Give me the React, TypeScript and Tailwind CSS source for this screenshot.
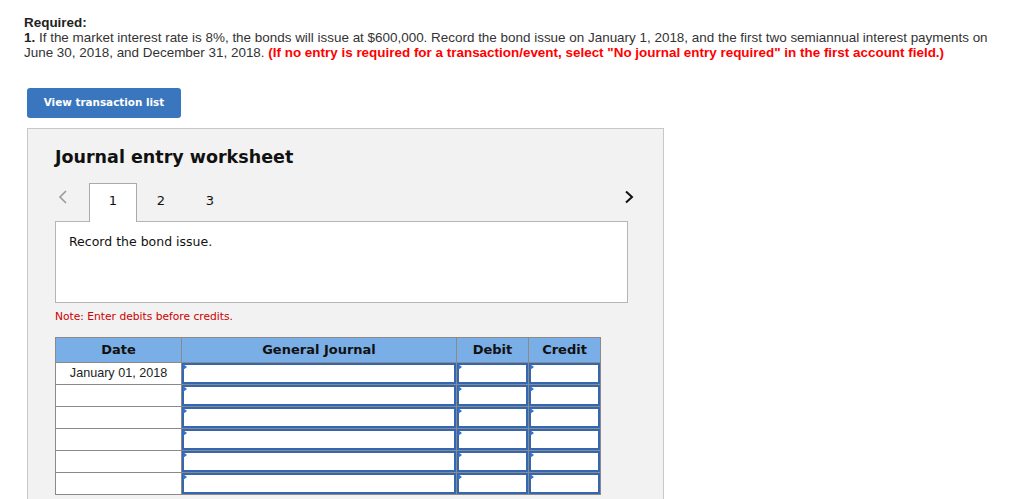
import React from 'react';

const rows = ['January 01, 2018', '', '', '', '', ''];

const InputCell: React.FC = () => (
    <div className="bg-white">
        <div className="relative h-full border-2 border-[#3467b0] bg-white">
            <span className="absolute -top-px -left-px h-0 w-0 border-y-[3px] border-y-transparent border-l-[4px] border-l-[#2f72d0]"></span>
        </div>
    </div>
);

const App: React.FC = () => {
    return (
        <div className="min-h-[499px] overflow-hidden bg-white">
            <div className="pl-6 pt-[15px] font-['Liberation_Sans',Arial,sans-serif] text-[13.45px] leading-[15px] text-[#333]">
                <p className="font-bold text-[#222]">Required:</p>
                <p>
                    <b className="text-[#222]">1.</b> If the market interest rate is 8%, the bonds will issue at $600,000. Record the bond issue on January 1, 2018, and the first two semiannual interest payments on
                    <br />
                    June 30, 2018, and December 31, 2018.{' '}
                    <span className="font-bold text-[#f00]">
                        (If no entry is required for a transaction/event, select "No journal entry required" in the first account field.)
                    </span>
                </p>
            </div>

            <button className="ml-[27px] mt-[28px] flex h-[30px] w-[154px] items-center justify-center rounded-[3px] bg-[#3a76bd] font-['DejaVu_Sans',Verdana,sans-serif] text-[10.4px] font-bold text-white">
                View transaction list
            </button>

            <div className="ml-[27px] mt-[10px] h-[400px] w-[637px] border border-[#c8c8c8] bg-[#f2f2f2] pl-[27px] pt-[17px] font-['DejaVu_Sans',Verdana,sans-serif]">
                <h2 className="text-[17.5px] font-bold leading-[22px] text-[#111]">Journal entry worksheet</h2>

                <div className="mt-[15px] flex h-[38px] w-[579px] items-start">
                    <div className="w-[34px] pl-[3px] pt-[7px]">
                        <svg width="10" height="14" viewBox="0 0 10 14">
                            <polyline points="8,1 2,7 8,13" fill="none" stroke="#9a9a9a" strokeWidth="1.6" />
                        </svg>
                    </div>
                    <div className="relative z-10 flex h-[39px] w-[48px] justify-center border border-b-0 border-[#aaa] bg-white pt-[7px] text-[13px] text-[#111]">
                        1
                    </div>
                    <div className="flex w-[48px] justify-center pt-[8px] text-[13px] text-[#111]">2</div>
                    <div className="flex w-[48px] justify-center pt-[8px] pl-[2px] text-[13px] text-[#111]">3</div>
                    <div className="ml-auto pt-[7px]">
                        <svg width="10" height="14" viewBox="0 0 10 14">
                            <polyline points="2,1.5 8,7 2,12.5" fill="none" stroke="#111" strokeWidth="2" />
                        </svg>
                    </div>
                </div>

                <div className="h-[82px] w-[573px] border border-[#b5b5b5] bg-white px-[13px] pt-[12px] text-[12.5px] leading-[16px] text-[#111]">
                    Record the bond issue.
                </div>

                <p className="mt-[7px] text-[10.7px] leading-[14px] text-[#c00]">Note: Enter debits before credits.</p>

                <div className="mt-[13px] grid w-[546px] grid-cols-[125px_274px_71px_71px] gap-px border border-[#8a8a8a] bg-[#8a8a8a]">
                    <div className="flex h-[24px] items-center justify-center bg-[#7aaee6] text-[13px] font-bold text-[#111]">Date</div>
                    <div className="flex h-[24px] items-center justify-center bg-[#7aaee6] text-[13px] font-bold text-[#111]">General Journal</div>
                    <div className="flex h-[24px] items-center justify-center bg-[#7aaee6] text-[13px] font-bold text-[#111]">Debit</div>
                    <div className="flex h-[24px] items-center justify-center bg-[#7aaee6] text-[13px] font-bold text-[#111]">Credit</div>
                    {rows.map((date, i) => (
                        <React.Fragment key={i}>
                            <div className="flex h-[21px] items-center justify-center bg-white font-['Liberation_Sans',Arial,sans-serif] text-[12.6px] text-[#222]">
                                {date}
                            </div>
                            <InputCell />
                            <InputCell />
                            <InputCell />
                        </React.Fragment>
                    ))}
                </div>
            </div>
        </div>
    );
};

export default App;
